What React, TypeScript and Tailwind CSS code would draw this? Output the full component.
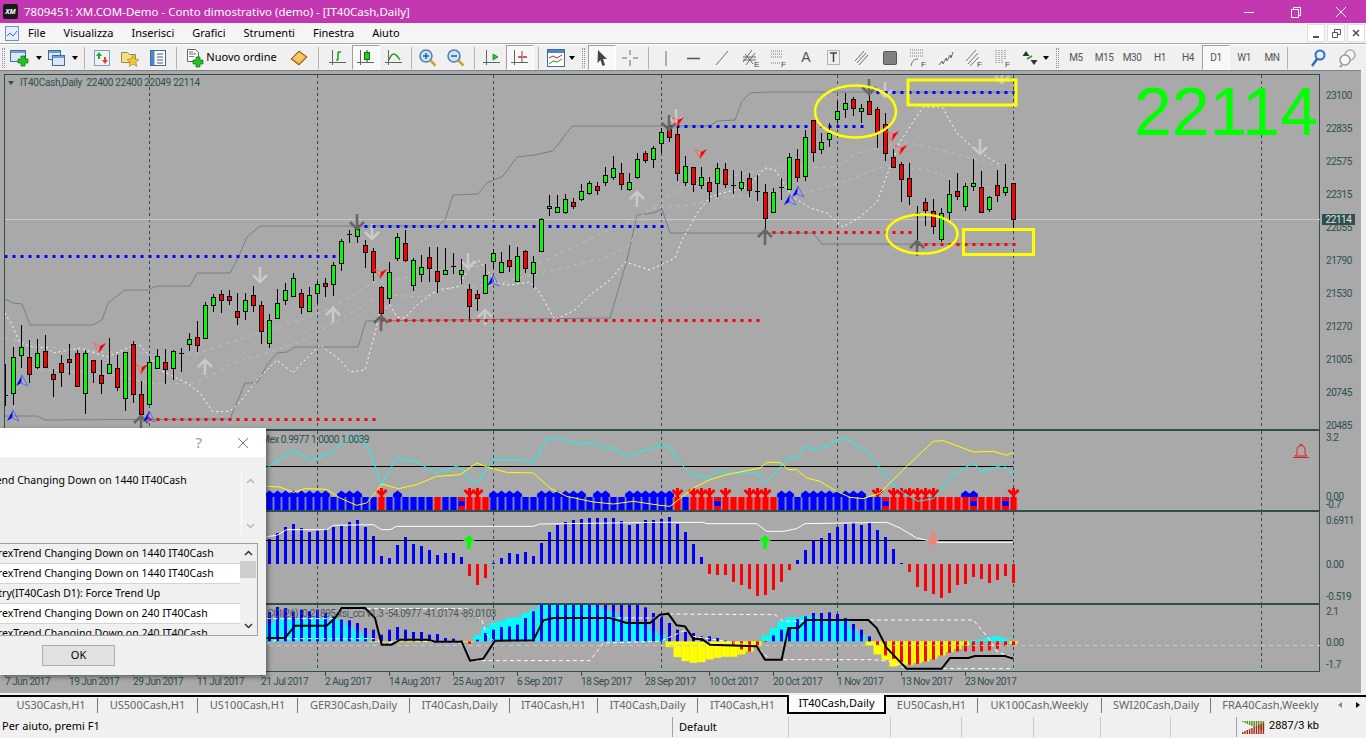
import type { ReactNode } from "react";

type Candle = [number, number, number, number, "g" | "r" | "d"];

// one row per bar, in page pixels: high, body top, body bottom, low
const CANDLES: Candle[] = [
  [364,395,396,406,"d"],[347,357,393,405,"g"],[325,347,355,368,"g"],[340,357,374,383,"r"],[339,353,367,369,"g"],
  [335,351,367,368,"r"],[369,374,379,397,"r"],[355,363,372,387,"r"],[344,359,362,375,"r"],[350,353,386,386,"r"],
  [350,353,393,414,"g"],[360,360,372,383,"r"],[360,375,383,394,"r"],[338,364,373,373,"g"],[355,368,387,391,"r"],
  [352,352,398,411,"g"],[341,344,394,403,"r"],[381,394,414,425,"r"],[356,362,404,405,"g"],[349,356,368,368,"g"],
  [349,362,369,384,"r"],[350,351,368,380,"g"],[348,353,354,372,"d"],[333,339,344,351,"g"],[321,337,345,352,"r"],
  [302,305,338,339,"g"],[294,297,305,312,"g"],[290,294,300,313,"r"],[290,296,300,305,"r"],[293,311,317,325,"r"],
  [293,300,311,320,"g"],[286,295,305,312,"r"],[301,305,331,344,"r"],[314,320,343,348,"g"],[289,303,318,319,"g"],
  [283,290,300,305,"g"],[273,278,296,297,"g"],[289,293,307,314,"r"],[287,295,311,312,"g"],[281,284,293,304,"g"],
  [278,283,286,297,"r"],[262,265,284,296,"g"],[239,241,263,271,"g"],[230,234,235,243,"d"],[225,229,236,243,"g"],
  [240,245,252,268,"r"],[248,251,272,281,"r"],[286,287,313,318,"r"],[262,272,298,304,"g"],[233,237,258,261,"g"],
  [230,243,260,262,"r"],[258,260,285,291,"g"],[255,267,274,282,"g"],[247,257,268,282,"r"],[247,271,281,293,"r"],
  [248,270,274,275,"g"],[253,266,267,274,"d"],[259,270,274,284,"g"],[284,289,306,319,"r"],[290,294,298,311,"r"],
  [264,275,293,293,"g"],[249,253,261,269,"g"],[252,262,272,273,"g"],[245,260,266,272,"r"],[247,256,281,282,"g"],
  [250,251,268,273,"r"],[256,262,273,288,"g"],[218,219,251,252,"g"],[195,206,208,216,"g"],[195,207,212,213,"g"],
  [194,199,212,214,"g"],[198,202,206,209,"r"],[184,191,199,201,"g"],[181,183,193,195,"g"],[182,186,190,195,"r"],
  [167,175,182,186,"g"],[156,168,177,180,"g"],[163,173,184,190,"r"],[173,182,189,191,"g"],[153,159,177,179,"g"],
  [151,153,160,163,"r"],[146,148,159,168,"g"],[128,132,143,153,"g"],[123,126,137,142,"r"],[125,134,173,181,"r"],
  [156,166,182,186,"g"],[167,167,184,192,"r"],[167,177,185,189,"g"],[177,182,191,202,"r"],[163,168,183,197,"g"],
  [163,169,184,188,"r"],[170,185,186,194,"d"],[171,182,188,191,"g"],[173,178,190,197,"r"],[175,191,192,201,"d"],
  [184,192,218,232,"r"],[188,192,212,213,"g"],[178,187,188,200,"d"],[153,157,189,190,"g"],[149,159,177,182,"r"],
  [130,137,176,181,"g"],[120,120,152,162,"r"],[133,142,149,154,"g"],[123,133,139,147,"g"],[101,111,119,123,"g"],
  [93,103,109,118,"g"],[97,99,108,116,"r"],[104,108,111,123,"g"],[81,101,114,114,"r"],[107,109,132,148,"r"],
  [113,124,153,161,"r"],[149,157,167,168,"r"],[162,164,179,202,"r"],[163,178,196,205,"r"],[206,213,214,243,"d"],
  [198,202,210,226,"r"],[199,211,226,234,"r"],[208,213,239,242,"g"],[180,194,212,220,"g"],[173,191,196,200,"r"],
  [183,186,206,211,"g"],[159,183,186,191,"g"],[171,187,212,213,"r"],[196,197,209,212,"g"],[170,185,195,202,"r"],
  [164,187,192,196,"g"],[183,183,219,229,"r"],
];

const GRID_X = [149, 317, 493, 661, 837, 1013, 1261];
const barX = (i: number) => 5 + 8 * i + 0.5;
const line = (pts: number[][]) => pts.map((p) => p.join(",")).join(" ");
// points read from crops of the reference, scaled 3x from an origin
const scaled = (ox: number, oy: number, pts: number[][]) => pts.map(([x, y]) => [ox + x / 3, oy + y / 3]);

const UPPER_BAND = [[5,299],[13,303],[22,304],[30,325],[93,325],[102,320],[108,303],[125,290],[148,290],[157,286],[190,286],[197,273],[230,273],[238,258],[247,237],[260,226],[438,226],[445,220],[453,195],[478,194],[487,183],[503,176],[517,157],[535,155],[552,151],[558,145],[567,132],[573,126],[710,126],[717,121],[735,120],[742,101],[750,93],[768,92],[1013,92]];
const LOWER_BAND = [[5,416],[37,416],[45,420],[230,419],[245,383],[257,383],[267,365],[277,353],[287,352],[295,347],[358,347],[366,321],[610,318],[627,260],[637,215],[653,213],[662,209],[670,233],[813,233],[822,244],[1013,244]];
const WHITE_A = [[5,313],[13,327],[20,343],[33,347],[48,348],[53,353],[80,348],[107,357],[130,347],[140,345],[147,353],[160,370],[187,383],[200,393],[213,412],[230,411],[240,402],[257,380],[267,370],[277,360],[293,373],[300,365],[320,345],[340,360],[350,372],[365,370],[375,333],[380,313],[390,305],[397,317],[405,318],[417,305],[437,290],[457,287],[467,272],[478,260],[487,270],[497,283],[510,285],[530,282],[540,293],[555,320],[575,310],[590,295],[610,280],[625,262],[650,270],[675,258],[682,240],[698,212],[710,197],[722,193],[748,187],[765,168],[775,170],[793,197],[810,208],[827,213],[843,227],[860,217],[877,202],[890,167],[900,142],[923,107],[942,107],[957,133],[973,148],[1000,165]];
const GRAY_UP = [[5,338],[50,347],[100,352],[143,353],[157,357],[200,353],[267,330],[300,320],[333,307],[373,283],[410,277],[447,270],[487,265],[540,263],[602,233],[635,220],[668,197],[682,187],[722,178],[748,173],[775,168],[837,167],[857,153],[903,142],[933,148],[960,155],[1000,167]];
const GRAY_LOW = [[40,370],[97,372],[155,384],[197,383],[233,363],[267,353],[300,342],[357,310],[380,295],[423,297],[457,287],[493,285],[540,273],[605,258],[628,247],[648,210],[662,207],[692,205],[722,197],[810,192],[843,182],[887,165],[927,170],[967,185],[1013,190]];

const DOTS: [number, number, number, string][] = [
  [5, 335, 256, "#0000ff"], [357, 663, 226, "#0000ff"], [669, 861, 126, "#0000ff"], [869, 1013, 92, "#0000ff"],
  [149, 373, 419, "#ff0000"], [381, 757, 320, "#ff0000"], [765, 909, 232, "#ff0000"], [917, 1013, 244, "#ff0000"],
];
const LIGHT_ARROWS: [number, number, "u" | "d"][] = [[205,367,"u"],[333,315,"u"],[485,317,"u"],[637,199,"u"],[260,275,"d"],[372,232,"d"],[468,261,"d"],[676,117,"d"],[885,90,"d"],[980,147,"d"],[1002,76,"d"]];
const DARK_ARROWS: [number, number, "u" | "d"][] = [[357,222,"d"],[669,123,"d"],[869,87,"d"],[141,423,"u"],[381,323,"u"],[765,237,"u"],[917,248,"u"]];
const RED_DARTS = [[100,348],[142,369],[381,274],[678,122],[701,154],[893,136],[901,150]];
const BLUE_DARTS = [[22,381],[13,416],[149,417],[493,281],[798,192],[790,200]];

// pane B, bars 33 to 126: B blue with cap, b blue, R red fork, r red, M mixed, F blue with fork, W mixed with cap, H red with cap
const STATE = "BBBBBBBBbBBBbbRbBbbbbrbbMRRrBBBBbbBBBBBBbBBbbBBBBBBRbRRRMRrrRRRrBBbBBBBBBBBbFMRRRRRRrrrHWrrrMR";
const CYAN_B = [...scaled(260,428,[[20,120],[100,65],[150,97],[215,75],[260,30],[300,30],[330,70],[365,170],[410,90],[465,100],[530,135],[590,115],[610,125],[630,160],[655,162],[700,95],[790,95],[820,105],[860,32],[900,30],[950,48],[1000,45],[1020,60],[1060,60],[1105,87],[1140,70],[1200,55]]),
  ...scaled(660,428,[[0,48],[25,50],[55,100],[95,140],[145,150],[175,127],[195,135],[290,135],[315,165],[350,130],[390,85],[410,92],[435,55],[460,65],[500,55],[530,35],[555,30],[625,75],[660,120],[700,170],[730,195],[775,220],[820,212],[870,150],[905,125],[940,105],[965,132],[1030,110],[1060,143]])];
const YELLOW_B = [...scaled(260,428,[[20,175],[60,177],[100,193],[135,182],[200,184],[240,210],[290,232],[320,225],[345,195],[365,168],[415,182],[470,170],[530,145],[600,140],[650,105],[690,120],[740,133],[820,135],[870,180],[920,205],[1000,222],[1060,228],[1120,220],[1200,232]]),
  ...scaled(660,428,[[30,235],[100,180],[150,155],[200,140],[300,120],[320,103],[360,103],[385,125],[410,125],[440,150],[480,160],[530,190],[570,208],[610,212],[660,195],[740,115],[820,40],[850,38],[940,72],[1000,70],[1040,82],[1060,73]])];

// pane C histogram, bars 33 to 126, pixels above (+) or below (-) the zero line
const HIST_C = [25,31,37,40,36,32,33,35,37,38,42,44,37,28,8,6,19,27,20,18,14,9,11,11,7,-12,-21,-14,1,6,11,10,12,8,21,32,39,42,44,45,46,46,46,46,43,39,40,44,44,45,47,40,32,20,7,-10,-11,-11,-18,-21,-25,-32,-31,-26,-18,-6,4,14,23,26,31,37,40,41,39,41,34,27,15,1,-8,-23,-27,-30,-34,-29,-21,-20,-13,-15,-19,-16,-12,-19];
const WHITE_C = [...scaled(260,428,[[20,326],[50,322],[80,305],[200,305],[220,292],[340,290],[365,305],[390,305],[410,295],[820,295],[840,288],[1200,283]]),
  ...scaled(660,428,[[130,283],[140,287],[290,287],[320,310],[370,310],[410,302],[435,287],[680,283],[720,300],[770,330],[830,343],[1058,343]])];

// pane D, bars 33 to 126, crop y of the bar end (640 is the zero line)
const WIDE_D = [585,572,572,575,575,572,570,572,570,577,595,610,625,640,640,640,640,640,640,640,640,640,640,640,640,640,622,598,585,578,570,568,555,545,530,530,530,530,530,530,530,535,545,555,570,580,585,590,610,620,655,685,697,702,700,692,687,684,684,677,668,652,622,600,580,568,568,563,565,570,573,575,577,605,622,650,677,693,713,708,708,703,698,690,680,670,660,650,636,634,628,625,632,645];
const THIN_D = [552,537,540,550,545,550,545,555,565,575,577,585,600,605,620,605,597,605,612,612,620,618,630,632,638,645,635,615,605,597,595,590,570,550,530,530,530,530,530,530,530,530,530,530,530,530,530,538,555,565,585,605,612,615,625,625,630,638,647,662,668,652,640,622,605,600,573,565,555,555,553,558,570,588,605,625,648,680,690,700,708,705,698,692,680,672,668,668,668,668,665,660,652,650];
const BLACK_D = [...scaled(260,428,[[20,630],[75,630],[105,593],[200,593],[225,570],[245,540],[315,540],[345,570],[365,650],[395,650],[420,635],[505,635],[525,641],[605,641],[630,698],[670,692],[705,638],[820,637],[850,577],[880,570],[1050,570],[1100,585],[1170,585],[1200,560]]),
  ...scaled(660,428,[[25,557],[50,592],[75,595],[100,632],[125,633],[150,650],[290,655],[315,695],[365,695],[385,600],[415,600],[440,576],[625,576],[650,600],[680,660],[740,722],[845,722],[870,690],[925,690],[945,684],[1035,684],[1060,692]])];
const WHITE_D1 = [...scaled(260,428,[[20,572],[220,572],[245,542],[620,542],[665,575],[680,620],[700,637],[820,637],[850,575],[880,570],[1200,570]]),
  ...scaled(660,428,[[0,558],[345,560],[370,580],[425,580],[440,576],[940,576],[985,630],[1010,670],[1060,690]])];
const WHITE_D2 = [...scaled(260,428,[[20,648],[60,632],[350,632],[365,650],[420,635],[520,641],[605,645],[630,698],[990,698],[1030,645],[1200,640]]),
  ...scaled(660,428,[[80,605],[100,625],[290,655],[330,695],[640,695],[690,700],[740,722],[1060,722]])];

const DATES = ["7 Jun 2017","19 Jun 2017","29 Jun 2017","11 Jul 2017","21 Jul 2017","2 Aug 2017","14 Aug 2017","25 Aug 2017","6 Sep 2017","18 Sep 2017","28 Sep 2017","10 Oct 2017","20 Oct 2017","1 Nov 2017","13 Nov 2017","23 Nov 2017"];
const PRICES = ["23100","22835","22575","22315","22055","21790","21530","21270","21005","20745","20485"];
const MENU = ["File","Visualizza","Inserisci","Grafici","Strumenti","Finestra","Aiuto"];
const TABS: [string, string][] = [
  ["US30Cash,H1","w-[93px] border-r"],["US500Cash,H1","w-[100px] border-r"],["US100Cash,H1","w-[100px] border-r"],
  ["GER30Cash,Daily","w-[112px] border-r"],["IT40Cash,Daily","w-[100px] border-r"],["IT40Cash,H1","w-[88px] border-r"],
  ["IT40Cash,Daily","w-[100px] border-r"],["IT40Cash,H1","w-[89px]"],
];
const TABS_AFTER: [string, string][] = [
  ["EU50Cash,H1","w-[92px] border-r"],["UK100Cash,Weekly","w-[124px] border-r"],["SWI20Cash,Daily","w-[109px] border-r"],["FRA40Cash,Weekly","w-[119px]"],
];
const ROWS = ["ForexTrend Changing Down on 1440 IT40Cash","ForexTrend Changing Down on 1440 IT40Cash","Entry(IT40Cash D1): Force Trend Up","ForexTrend Changing Down on 240 IT40Cash","ForexTrend Changing Down on 240 IT40Cash"];
const TIMEFRAMES = ["M5","M15","M30","H1","H4","D1","W1","MN"];

const Grid = ({ y1, y2 }: { y1: number; y2: number }) => (
  <>
    {GRID_X.map((x) => (
      <line key={x} x1={x + 0.5} x2={x + 0.5} y1={y1} y2={y2} stroke="#2f4f4f" strokeDasharray="3 3" />
    ))}
  </>
);

const BigArrow = ({ x, y, dir, color }: { x: number; y: number; dir: "u" | "d"; color: string }) => {
  const s = dir === "u" ? 1 : -1;
  return (
    <path
      d={`M${x} ${y + 8 * s}V${y - 7 * s}M${x - 7} ${y}L${x} ${y - 7 * s}L${x + 7} ${y}`}
      fill="none"
      stroke={color}
      strokeWidth="2.5"
    />
  );
};

const PricePane = () => (
  <svg className="block" width="1315" height="354" viewBox="5 75 1315 354">
    <Grid y1={75} y2={429} />
    <line x1="5" x2="1320" y1="219.5" y2="219.5" stroke="#c8c8c8" />
    <polyline points={line(UPPER_BAND)} fill="none" stroke="#708090" />
    <polyline points={line(LOWER_BAND)} fill="none" stroke="#708090" />
    <polyline points={line(GRAY_UP)} fill="none" stroke="#bdbdbd" strokeDasharray="4 4" />
    <polyline points={line(GRAY_LOW)} fill="none" stroke="#bdbdbd" strokeDasharray="4 4" />
    <polyline points={line(WHITE_A)} fill="none" stroke="#ffffff" strokeDasharray="2 3" />
    {LIGHT_ARROWS.map(([x, y, d]) => (
      <BigArrow key={`l${x}`} x={x} y={y} dir={d} color="#c9c9c9" />
    ))}
    {DOTS.map(([from, to, y, color]) => {
      const dots = [];
      for (let x = from; x <= to; x += 8) dots.push(x);
      return dots.map((x) => <rect key={`${y}-${x}`} x={x - 0.5} y={y - 1} width="3" height="3" fill={color} />);
    })}
    {CANDLES.map(([high, top, bottom, low, kind], i) => {
      const x = barX(i);
      return (
        <g key={i} shapeRendering="crispEdges">
          <line x1={x} x2={x} y1={high} y2={low} stroke="#000" />
          {kind === "d" ? (
            <line x1={x - 2.5} x2={x + 2.5} y1={top + 0.5} y2={top + 0.5} stroke="#000" />
          ) : (
            <rect x={x - 2} y={top + 0.5} width="4" height={Math.max(bottom - top, 1)} fill={kind === "g" ? "#00ff00" : "#ff0000"} stroke="#000" />
          )}
        </g>
      );
    })}
    {DARK_ARROWS.map(([x, y, d]) => (
      <BigArrow key={`d${x}`} x={x} y={y} dir={d} color="#666666" />
    ))}
    {RED_DARTS.map(([x, y]) => (
      <g key={`r${x}`}>
        <polygon points={`${x - 6},${y - 5} ${x},${y - 2} ${x - 1},${y + 5}`} fill="none" stroke="#ff5a4a" strokeWidth="0.8" />
        <polygon points={`${x},${y - 2} ${x + 6},${y - 5} ${x - 1},${y + 5}`} fill="#ff0000" />
      </g>
    ))}
    {BLUE_DARTS.map(([x, y]) => (
      <g key={`b${x}`}>
        <polygon points={`${x - 6},${y + 5} ${x},${y - 6} ${x - 1},${y + 2}`} fill="#0000ff" />
        <polygon points={`${x},${y - 6} ${x + 6},${y + 5} ${x - 1},${y + 2}`} fill="none" stroke="#4a5cff" strokeWidth="0.8" />
      </g>
    ))}
    <ellipse cx="855.5" cy="111.5" rx="40.5" ry="26" fill="none" stroke="#ffff00" strokeWidth="2.5" />
    <ellipse cx="922" cy="234" rx="35.5" ry="19.5" fill="none" stroke="#ffff00" strokeWidth="2.5" />
    <rect x="908" y="80" width="108" height="25" fill="none" stroke="#ffff00" strokeWidth="3" />
    <rect x="963.5" y="229.5" width="70" height="25" fill="none" stroke="#ffff00" strokeWidth="3" />
  </svg>
);

const PaneB = () => (
  <svg className="block" width="1315" height="79" viewBox="5 431 1315 79">
    <Grid y1={431} y2={510} />
    <line x1="266" x2="1013" y1="466.5" y2="466.5" stroke="#000" />
    {STATE.split("").map((s, n) => {
      const x = barX(n + 33);
      const red = "RrF".includes(s) ? s !== "F" : s === "H";
      const cap = "BWH".includes(s);
      const fork = "RF".includes(s);
      const mixed = s === "M" || s === "W";
      return (
        <g key={n}>
          <rect x={x - 4} y="497" width="8" height="13" fill={red ? "#e07070" : "#6c78c8"} />
          <rect x={x - 3} y="497" width="6" height="13" fill={red ? "#ff0000" : "#0000ff"} />
          {mixed && (
            <>
              <rect x={x - 3} y="497" width="6" height="4" fill="#ff0000" />
              <rect x={x - 3} y="501" width="6" height="5" fill="#0000ff" />
              <rect x={x - 3} y="506" width="6" height="4" fill="#ff0000" />
            </>
          )}
          {cap && <polygon points={`${x - 4.5},497 ${x - 4.5},494 ${x},490.5 ${x + 4.5},494 ${x + 4.5},497`} fill="#0000ff" />}
          {fork && <path d={`M${x} 497V488M${x - 5} 490L${x} 495L${x + 5} 490`} stroke="#ff0000" strokeWidth="3" fill="none" />}
        </g>
      );
    })}
    <polyline points={line(CYAN_B)} fill="none" stroke="#00ffff" />
    <polyline points={line(YELLOW_B)} fill="none" stroke="#ffff00" />
  </svg>
);

const PaneC = () => (
  <svg className="block" width="1315" height="91" viewBox="5 512 1315 91">
    <Grid y1={512} y2={603} />
    {HIST_C.map((v, n) => {
      const x = barX(n + 33);
      return v >= 0 ? (
        <rect key={n} x={x - 1.5} y={564 - v} width="3" height={v} fill="#0000ff" />
      ) : (
        <rect key={n} x={x - 1.5} y={564} width="3" height={-v} fill="#ff0000" />
      );
    })}
    <line x1="266" x2="1013" y1="540.5" y2="540.5" stroke="#000" />
    <polyline points={line(WHITE_C)} fill="none" stroke="#ffffff" />
    <path d="M469 535l6 6h-4v8h-4v-8h-4z" fill="#00ff00" />
    <path d="M765 535l6 6h-4v8h-4v-8h-4z" fill="#00ff00" />
    <path d="M933 546l6-6h-4v-8h-4v8h-4z" fill="#fa8072" />
  </svg>
);

const PaneD = () => (
  <svg className="block" width="1315" height="66" viewBox="5 605 1315 66">
    <Grid y1={605} y2={671} />
    {WIDE_D.map((z, n) => {
      const x = barX(n + 33);
      const y = 428 + z / 3;
      return z < 640 ? (
        <rect key={n} x={x - 4} y={y} width="8" height={641.3 - y} fill="#00ffff" />
      ) : (
        <rect key={n} x={x - 4} y={641.3} width="8" height={y - 641.3 + 0.8} fill="#ffff00" />
      );
    })}
    {THIN_D.map((z, n) => {
      const x = barX(n + 33);
      const y = 428 + z / 3;
      return z < 640 ? (
        <rect key={n} x={x - 1.5} y={y} width="3" height={641.3 - y} fill="#0000ff" />
      ) : (
        <rect key={n} x={x - 1.5} y={641.3} width="3" height={y - 641.3 + 0.8} fill="#ff0000" />
      );
    })}
    <line x1="5" x2="1320" y1="645.5" y2="645.5" stroke="#c8c8c8" strokeDasharray="4 4" />
    <polyline points={line(WHITE_D1)} fill="none" stroke="#ffffff" strokeDasharray="4 3" />
    <polyline points={line(WHITE_D2)} fill="none" stroke="#ffffff" strokeDasharray="4 3" />
    <polyline points={line(BLACK_D)} fill="none" stroke="#000" strokeWidth="2" />
  </svg>
);

const Bell = () => (
  <svg width="18" height="16" viewBox="0 0 18 16" fill="none" stroke="#e02020" strokeWidth="1">
    <path d="M5 11V6.5a4 4 0 0 1 8 0V11l2 2H3z" />
    <path d="M1 14.5h16M7.5 1.5h3" />
  </svg>
);

const Narrow = "font-['Roboto',sans-serif] tracking-[-0.45px]";

const Ic = ({ children, w = 20, h = 20 }: { children: ReactNode; w?: number; h?: number }) => (
  <svg width={w} height={h} viewBox={`0 0 ${w} ${h}`} fill="none">
    {children}
  </svg>
);
const Plus = ({ x, y }: { x: number; y: number }) => (
  <path d={`M${x + 3} ${y}h4v3h3v4h-3v3h-4v-3h-3v-4h3z`} fill="#22c422" stroke="#146c14" strokeWidth="0.7" />
);
const Win = ({ x, y, w, h }: { x: number; y: number; w: number; h: number }) => (
  <>
    <rect x={x + 0.5} y={y + 0.5} width={w} height={h} fill="#dce8f6" stroke="#3f6d9e" />
    <rect x={x + 1} y={y + 1} width={w - 1} height="2" fill="#6f9fd4" />
  </>
);
const Axes = () => <path d="M4.5 2v15M1 14.5h17" stroke="#5a6a5a" />;
const Dropdown = () => <span className="ml-[3px] h-0 w-0 border-x-[3px] border-t-[4px] border-x-transparent border-t-black" />;

const Tool = ({ children, w = "w-[28px]", on }: { children: ReactNode; w?: string; on?: boolean }) => (
  <div className={`${w} flex h-[25px] shrink-0 items-center justify-center ${on ? "border border-t-[#a0a0a0] border-l-[#a0a0a0] border-r-white border-b-white bg-[#f8f8f8]" : ""}`}>
    {children}
  </div>
);
const Sep = ({ w = "w-[8px]" }: { w?: string }) => (
  <div className={`${w} flex h-[25px] shrink-0 items-center justify-center`}>
    <div className="h-[22px] w-px bg-[#b4b4b4]" />
  </div>
);
const Grip = ({ w = "w-[6px]" }: { w?: string }) => (
  <div className={`${w} flex h-[25px] shrink-0 items-center justify-center`}>
    <div className="h-[20px] w-[3px] border-x border-dotted border-[#909090]" />
  </div>
);
const Stroke = ({ d, letter }: { d: string; letter?: string }) => (
  <Ic>
    <path d={d} stroke="#6a6a6a" strokeWidth="1" />
    {letter && (
      <text x="14" y="19" fontSize="8" fill="#444" fontFamily="Liberation Sans">
        {letter}
      </text>
    )}
  </Ic>
);

const Toolbar = () => (
  <div className="flex h-[26px] items-center border-t border-t-white bg-[#f0f0f0]">
    <Grip />
    <Tool w="w-[38px]">
      <Ic w={24}>
        <Win x={1} y={2} w={15} h={11} />
        <Plus x={9} y={8} />
      </Ic>
      <Dropdown />
    </Tool>
    <Tool w="w-[36px]">
      <Ic w={22}>
        <Win x={1} y={2} w={12} h={9} />
        <Win x={5} y={7} w={12} h={10} />
      </Ic>
      <Dropdown />
    </Tool>
    <Sep />
    <Tool>
      <Ic>
        <rect x="2.5" y="2.5" width="15" height="15" fill="#eef3fa" stroke="#7d9cc0" />
        <path d="M7 4l3 4H8v3H6V8H4z" fill="#22aa22" />
        <path d="M13 16l-3-4h2V9h2v3h2z" fill="#e0452a" />
      </Ic>
    </Tool>
    <Tool>
      <Ic>
        <path d="M1.5 4.5h6l2 2h6v8h-14z" fill="#f3dd8f" stroke="#9f8a3f" />
        <path d="M13 7l1.8 4 4.2.4-3.2 2.8 1 4.3-3.8-2.3-3.8 2.3 1-4.3L7 11.4l4.2-.4z" fill="#f0c93a" stroke="#a98b1c" strokeWidth="0.7" />
      </Ic>
    </Tool>
    <Tool>
      <Ic>
        <rect x="2.5" y="2.5" width="15" height="15" fill="#fff" stroke="#3f6d9e" />
        <rect x="3" y="3" width="3.5" height="14" fill="#4f86c6" />
        <path d="M9 6h6M9 9h6M9 12h6M9 15h6" stroke="#555" />
      </Ic>
    </Tool>
    <Sep />
    <Tool w="w-[105px]">
      <div className="flex items-center gap-[2px] pr-[3px]">
        <Ic w={19}>
          <path d="M2.5 1.5h8l3 3v9h-11z" fill="#fff" stroke="#666" />
          <path d="M4 6h7M4 8.5h5M4 4h4" stroke="#777" />
          <Plus x={8} y={9} />
        </Ic>
        <span className="text-[11px] text-black">Nuovo ordine</span>
      </div>
    </Tool>
    <Tool>
      <Ic>
        <path d="M2 11l8-8 8 6-8 8z" fill="#d99a2b" stroke="#8a5a10" />
        <path d="M4 10.5l6-6 6 4.5-6 6z" fill="#f2c96b" />
      </Ic>
    </Tool>
    <Sep w="w-[11px]" />
    <Tool>
      <Ic>
        <Axes />
        <path d="M10 4v8M10 4h3M8 12h2" stroke="#1f9a1f" strokeWidth="1.5" />
      </Ic>
    </Tool>
    <Tool on>
      <Ic>
        <Axes />
        <path d="M11 2v12" stroke="#333" />
        <rect x="8.5" y="4.5" width="5" height="7" fill="#22cc22" stroke="#146c14" />
      </Ic>
    </Tool>
    <Tool>
      <Ic>
        <Axes />
        <path d="M5 12c3-8 6-8 11 0" stroke="#1f9a1f" strokeWidth="1.3" />
      </Ic>
    </Tool>
    <Sep w="w-[6px]" />
    <Tool>
      <Ic>
        <circle cx="8" cy="8" r="6" fill="#cfe3f7" stroke="#4a7fb5" strokeWidth="1.5" />
        <path d="M5 8h6M8 5v6" stroke="#2a5f9a" strokeWidth="1.5" />
        <path d="M12.5 12.5l5 5" stroke="#d4a02a" strokeWidth="2.5" />
      </Ic>
    </Tool>
    <Tool>
      <Ic>
        <circle cx="8" cy="8" r="6" fill="#cfe3f7" stroke="#4a7fb5" strokeWidth="1.5" />
        <path d="M5 8h6" stroke="#2a5f9a" strokeWidth="1.5" />
        <path d="M12.5 12.5l5 5" stroke="#d4a02a" strokeWidth="2.5" />
      </Ic>
    </Tool>
    <Sep />
    <Tool>
      <Ic>
        <Axes />
        <path d="M11 6v6l5-3z" fill="#22cc22" stroke="#146c14" strokeWidth="0.7" />
      </Ic>
    </Tool>
    <Tool on>
      <Ic>
        <Axes />
        <path d="M12 3v12" stroke="#555" />
        <path d="M8 9h4M13 9h4" stroke="#d02020" strokeWidth="1.5" />
      </Ic>
    </Tool>
    <Sep />
    <Tool w="w-[36px]">
      <Ic>
        <rect x="1.5" y="1.5" width="17" height="17" fill="#fff" stroke="#3f6d9e" />
        <rect x="2" y="2" width="16" height="3" fill="#4f86c6" />
        <path d="M3 10l4-2 4 2 5-3" stroke="#d02020" />
        <path d="M3 16l4-3 4 1 5-3" stroke="#1f9a1f" />
      </Ic>
      <Dropdown />
    </Tool>
    <Grip w="w-[10px]" />
    <Tool on>
      <Ic>
        <path d="M6 2l9 9h-4l2 6-2.5 1-2-6-3 3z" fill="#444" />
      </Ic>
    </Tool>
    <Tool>
      <Stroke d="M10 2v5M10 12v6M2 10h5M13 10h5" />
    </Tool>
    <Sep />
    <Tool><Stroke d="M10 3v15" /></Tool>
    <Tool><Ic><path d="M3 10.5h13" stroke="#555" strokeWidth="1.5" /></Ic></Tool>
    <Tool><Stroke d="M4 17L16 3" /></Tool>
    <Tool><Stroke d="M3 14L12 2M6 17L15 5M3 9h13M3 12h13M5 6l8 10" letter="E" /></Tool>
    <Tool><Ic><path d="M3 3h12M3 6h12M3 9h12M3 15h9" stroke="#777" strokeDasharray="1 1" /><text x="13" y="19" fontSize="8" fill="#444" fontFamily="Liberation Sans">F</text></Ic></Tool>
    <Tool><span className="text-[14px] font-['Liberation_Sans'] text-[#555]">A</span></Tool>
    <Tool><Ic><rect x="3.5" y="2.5" width="12" height="14" stroke="#777" strokeDasharray="1 1" /><path d="M6 5h7M9.5 5v9" stroke="#444" strokeWidth="1.5" /></Ic></Tool>
    <Tool><Stroke d="M3 13L12 3M5 15L14 5M7 17L16 7" /></Tool>
    <Tool><Ic><rect x="3.5" y="3.5" width="13" height="13" rx="1" fill="#808080" stroke="#555" /></Ic></Tool>
    <Tool><Ic><path d="M2 2h14M2 5h14M2 8h14" stroke="#777" strokeDasharray="1 1" /><path d="M3 18c1-5 3-7 7-7" stroke="#666" /><text x="13" y="19" fontSize="8" fill="#444" fontFamily="Liberation Sans">F</text></Ic></Tool>
    <Tool><Stroke d="M3 17l3-4 1 3 3-6 1 3 3-6 1 3 2-6" /></Tool>
    <Tool><Ic><path d="M2 13L12 2M4 16L14 5M6 18L15 9" stroke="#777" /><text x="13" y="19" fontSize="8" fill="#444" fontFamily="Liberation Sans">F</text></Ic></Tool>
    <Tool><Ic><path d="M4 2v14M7 2v14M10 2v14M13 2v10" stroke="#777" strokeDasharray="1 1" /><text x="13" y="19" fontSize="8" fill="#444" fontFamily="Liberation Sans">F</text></Ic></Tool>
    <Tool w="w-[36px]">
      <Ic>
        <path d="M6 3l3.5 5h-7zM14 17l-3.5-5h7z" fill="#333" />
        <path d="M7 11l5-3" stroke="#1f9a1f" strokeWidth="1.5" />
      </Ic>
      <Dropdown />
    </Tool>
    <Grip w="w-[10px]" />
    {TIMEFRAMES.map((t) => (
      <Tool key={t} on={t === "D1"}>
        <span className={`${Narrow} text-[10px] text-[#555]`}>{t}</span>
      </Tool>
    ))}
    <Sep w="w-[3px]" />
    <div className="w-[14px] shrink-0" />
    <Tool w="w-[30px]">
      <Ic>
        <circle cx="12" cy="7" r="4.5" stroke="#2e6fc0" strokeWidth="2" fill="#e6f0fb" />
        <path d="M9 11l-5 7" stroke="#2e6fc0" strokeWidth="2.5" />
      </Ic>
    </Tool>
    <Tool w="w-[30px]">
      <Ic>
        <circle cx="12" cy="7" r="5" stroke="#aaa" strokeWidth="1.5" fill="#f6f6f6" />
        <circle cx="7" cy="12" r="5" stroke="#999" strokeWidth="1.5" fill="#f6f6f6" />
        <path d="M4 17l-2 2" stroke="#999" strokeWidth="2" />
      </Ic>
    </Tool>
  </div>
);

const Dialog = () => (
  <div className="absolute left-0 top-[428px] flex h-[247px] w-[266px] flex-col overflow-hidden bg-[#f0f0f0] text-[10.5px] shadow-[2px_2px_5px_rgba(0,0,0,0.45)]">
    <div className="flex h-[29px] shrink-0 items-center justify-end bg-white pr-[16px] text-[#9a9a9a]">
      <span className="mr-[34px] text-[15px]">?</span>
      <svg width="14" height="14" viewBox="0 0 14 14" stroke="#777">
        <path d="M2 2l10 10M12 2L2 12" />
      </svg>
    </div>
    <div className="flex h-[86px] shrink-0">
      <div className="w-[241px] overflow-hidden pt-[15px]">
        <div className="ml-[-41px] whitespace-nowrap leading-[16px]">{ROWS[0]}</div>
      </div>
      <div className="mt-[16px] flex h-[61px] w-[17px] flex-col items-center justify-between border-l border-white py-[5px] pl-[1px]">
        <svg width="9" height="6" viewBox="0 0 9 6" fill="none" stroke="#b8b8b8" strokeWidth="1.5"><path d="M1 5l3.5-3.5L8 5" /></svg>
        <svg width="9" height="6" viewBox="0 0 9 6" fill="none" stroke="#b8b8b8" strokeWidth="1.5"><path d="M1 1l3.5 3.5L8 1" /></svg>
      </div>
    </div>
    <div className="flex h-[93px] w-[258px] shrink-0 border border-l-0 border-[#a0a0a0] bg-white">
      <div className="flex-1 overflow-hidden">
        {ROWS.map((r, i) => (
          <div key={i} className={`flex h-[20px] items-center border-b border-[#d4d4d4] pt-[1px] ${i % 2 === 0 ? "bg-[#f0f0f0]" : "bg-white"}`}>
            <span className="ml-[-14px] whitespace-nowrap">{r}</span>
          </div>
        ))}
      </div>
      <div className="flex w-[17px] flex-col items-center justify-between bg-[#f0f0f0] py-[6px]">
        <svg width="9" height="6" viewBox="0 0 9 6" fill="none" stroke="#333" strokeWidth="1.5"><path d="M1 5l3.5-3.5L8 5" /></svg>
        <div className="absolute left-[240px] top-[133px] h-[17px] w-[16px] bg-[#cdcdcd]" />
        <svg width="9" height="6" viewBox="0 0 9 6" fill="none" stroke="#333" strokeWidth="1.5"><path d="M1 1l3.5 3.5L8 1" /></svg>
      </div>
    </div>
    <div className="ml-[42px] mt-[9px] flex h-[21px] w-[73px] items-center justify-center border border-[#adadad] bg-[#e1e1e1] text-[11px]">OK</div>
  </div>
);

export default function App() {
  return (
    <div className="relative h-[738px] w-[1366px] overflow-hidden bg-[#f0f0f0] font-['Noto_Sans',sans-serif] text-[11px] text-black">
      {/* title bar */}
      <div className="flex h-[23px] items-center bg-[#c337b0] text-[11.5px] text-white">
        <div className="ml-[3px] flex h-[15px] w-[15px] items-center justify-center rounded-[2px] bg-[#1a1a1a] text-[7px] font-bold italic leading-none text-white">XM</div>
        <span className="ml-[6px]">7809451: XM.COM-Demo - Conto dimostrativo (demo) - [IT40Cash,Daily]</span>
        <div className="ml-auto flex items-center">
          <svg width="46" height="16" viewBox="0 0 46 16" stroke="#fff"><path d="M18 8.5h10" /></svg>
          <svg width="46" height="16" viewBox="0 0 46 16" fill="none" stroke="#fff"><path d="M19.5 5.5h7v8h-7zM21.5 5.5v-2h7v8h-2" /></svg>
          <svg width="46" height="16" viewBox="0 0 46 16" stroke="#fff" className="mr-[2px]"><path d="M18 3l10 10M28 3L18 13" /></svg>
        </div>
      </div>
      {/* menu */}
      <div className="flex h-[21px] items-center border-b border-b-[#a8a8a8] bg-[#f5f5f5]">
        <svg className="ml-[5px] mr-[9px]" width="14" height="15" viewBox="0 0 14 15" fill="none">
          <rect x="0.5" y="0.5" width="13" height="14" fill="#e6eefb" stroke="#6e95c8" />
          <path d="M2 10l3-3 3 3 4-5" stroke="#3f6fb0" />
        </svg>
        <div className="flex gap-[18px]">
          {MENU.map((m) => (
            <span key={m}>{m}</span>
          ))}
        </div>
        <div className="ml-auto mr-[1px] flex gap-[2px]">
          <div className="flex h-[18px] w-[18px] items-end justify-center border border-[#e0e0e0] bg-white pb-[3px]"><div className="h-[2px] w-[6px] bg-[#555]" /></div>
          <div className="flex h-[18px] w-[18px] items-center justify-center border border-[#e0e0e0] bg-white">
            <svg width="9" height="9" viewBox="0 0 9 9" fill="none" stroke="#555"><path d="M.5 3.5h5v5h-5zM2.5 3V.5h6v5H6" /></svg>
          </div>
          <div className="flex h-[18px] w-[18px] items-center justify-center border border-[#e0e0e0] bg-white">
            <svg width="8" height="8" viewBox="0 0 8 8" stroke="#555" strokeWidth="1.6"><path d="M1 1l6 6M7 1L1 7" /></svg>
          </div>
        </div>
      </div>
      <Toolbar />
      {/* chart window */}
      <div className="flex h-[623px]">
        <div className={`${Narrow} h-full w-[1361px] border-t border-t-[#808080] bg-[#a9a9a9] pl-[1px] pt-[3px] text-[10px] text-[#2f4f4f]`}>
          <div className="ml-[3px]">
            <div className="flex h-[357px]">
              <div className="relative h-full w-[1316px] border-x border-b-2 border-t border-[#2f4f4f]">
                <PricePane />
                <div className="absolute left-[3px] top-[2px] flex items-center gap-[6px] whitespace-nowrap leading-[12px] tracking-[-0.28px]">
                  <span className="h-0 w-0 border-x-[3px] border-t-[4px] border-x-transparent border-t-[#2f4f4f]" />
                  <span>IT40Cash,Daily&nbsp; 22400 22400 22049 22114</span>
                </div>
                <div className="absolute right-[1px] top-[2px] font-['Liberation_Sans',sans-serif] text-[68px] leading-[68px] tracking-normal text-[#00ff00]">22114</div>
              </div>
              <div className="relative flex w-[41px] flex-col gap-[25px] pl-[6px] pt-[18px] leading-[8px]">
                {PRICES.map((p) => (
                  <div key={p}>{p}</div>
                ))}
                <div className="absolute left-[2px] top-[140px] flex h-[11px] w-[33px] items-center justify-center bg-[#2f4f4f] text-[#e6e6e6]">22114</div>
              </div>
            </div>
            <div className="flex h-[81px]">
              <div className="relative h-full w-[1316px] border-x border-b-2 border-[#2f4f4f]">
                <PaneB />
                <div className="absolute right-[950px] top-[3px] whitespace-nowrap leading-[12px]">Mex 0.9977 1.0000 1.0039</div>
                <div className="absolute left-[1287px] top-[12px]"><Bell /></div>
              </div>
              <div className="flex w-[41px] flex-col pl-[6px] leading-[8px]">
                <div className="mt-[3px]">3.2</div>
                <div className="mt-[51px]">0.00</div>
                <div>-0.7</div>
              </div>
            </div>
            <div className="flex h-[93px]">
              <div className="h-full w-[1316px] border-x border-b-2 border-[#2f4f4f]">
                <PaneC />
              </div>
              <div className="flex w-[41px] flex-col pl-[6px] leading-[8px]">
                <div className="mt-[5px]">0.6911</div>
                <div className="mt-[36px]">0.00</div>
                <div className="mt-[24px]">-0.519</div>
              </div>
            </div>
            <div className="flex h-[67px]">
              <div className="relative h-full w-[1316px] border-x border-b border-[#2f4f4f]">
                <PaneD />
                <div className="absolute right-[823px] top-[3px] whitespace-nowrap leading-[12px] text-[#4a5a5a]">CCI(26) -0.21895 xsi_cci v1.3 -54.0977 -41.0174 -89.0103</div>
              </div>
              <div className="flex w-[41px] flex-col pl-[6px] leading-[8px]">
                <div className="mt-[3px]">2.1</div>
                <div className="mt-[23px]">0.00</div>
                <div className="mt-[14px]">-1.7</div>
              </div>
            </div>
            <div className="flex">
              {DATES.map((d) => (
                <div key={d} className="h-[21px] w-[64px] shrink-0 whitespace-nowrap border-l border-transparent">
                  <div className="h-[4px] w-px bg-[#2f4f4f]" />
                  <div className="mt-[-1px] pt-[1px] leading-[12px]">{d}</div>
                </div>
              ))}
            </div>
          </div>
        </div>
        <div className="w-[5px] bg-[#f0f0f0]" />
      </div>
      {/* tabs */}
      <div className="h-[22px] pt-[2px]">
        <div className="flex h-[18px] items-start border-t-2 border-black pl-[5px] text-[#666]">
          {TABS.map(([t, w], i) => (
            <div key={i} className={`${w} mt-[1px] flex h-[15px] items-center justify-center border-[#777]`}>{t}</div>
          ))}
          <div className="mt-[-2px] flex h-[19px] w-[99px] items-center justify-center border-x-2 border-b-2 border-black bg-white text-black">IT40Cash,Daily</div>
          {TABS_AFTER.map(([t, w], i) => (
            <div key={i} className={`${w} mt-[1px] flex h-[15px] items-center justify-center border-[#777]`}>{t}</div>
          ))}
          <div className="mt-[5px] ml-[8px] h-0 w-0 border-y-[3px] border-r-[4px] border-y-transparent border-r-[#888]" />
          <div className="mt-[5px] ml-[14px] h-0 w-0 border-y-[3px] border-l-[4px] border-y-transparent border-l-black" />
        </div>
      </div>
      {/* status bar */}
      <div className="flex h-[23px] items-center bg-[#f0f0f0]">
        <div className="w-[672px] pl-[2px]">Per aiuto, premi F1</div>
        <div className="h-[20px] w-[116px] border-l border-[#a0a0a0] pl-[6px] leading-[20px]">Default</div>
        <div className="h-[20px] w-[102px] border-l border-[#c8c8c8]" />
        <div className="h-[20px] w-[71px] border-l border-[#c8c8c8]" />
        <div className="h-[20px] w-[72px] border-l border-[#c8c8c8]" />
        <div className="h-[20px] w-[67px] border-l border-[#c8c8c8]" />
        <div className="h-[20px] w-[70px] border-l border-[#c8c8c8]" />
        <div className="h-[20px] w-[66px] border-l border-[#c8c8c8]" />
        <div className="flex h-[20px] items-center gap-[4px] border-l border-[#a0a0a0] pl-[5px]">
          <svg width="23" height="14" viewBox="0 0 23 14">
            {[2,3,4,5,6,7,8,9,10,11].map((n, i) => (
              <g key={n}>
                <rect x={i * 2.3} y="1" width="1.4" height={n - 1} fill="#5a8a1c" />
                <rect x={i * 2.3} y={14 - n} width="1.4" height={n} fill="#a82818" />
              </g>
            ))}
          </svg>
          <span className="font-['Roboto',sans-serif] text-[11px]">2887/3 kb</span>
        </div>
      </div>
      <Dialog />
    </div>
  );
}
